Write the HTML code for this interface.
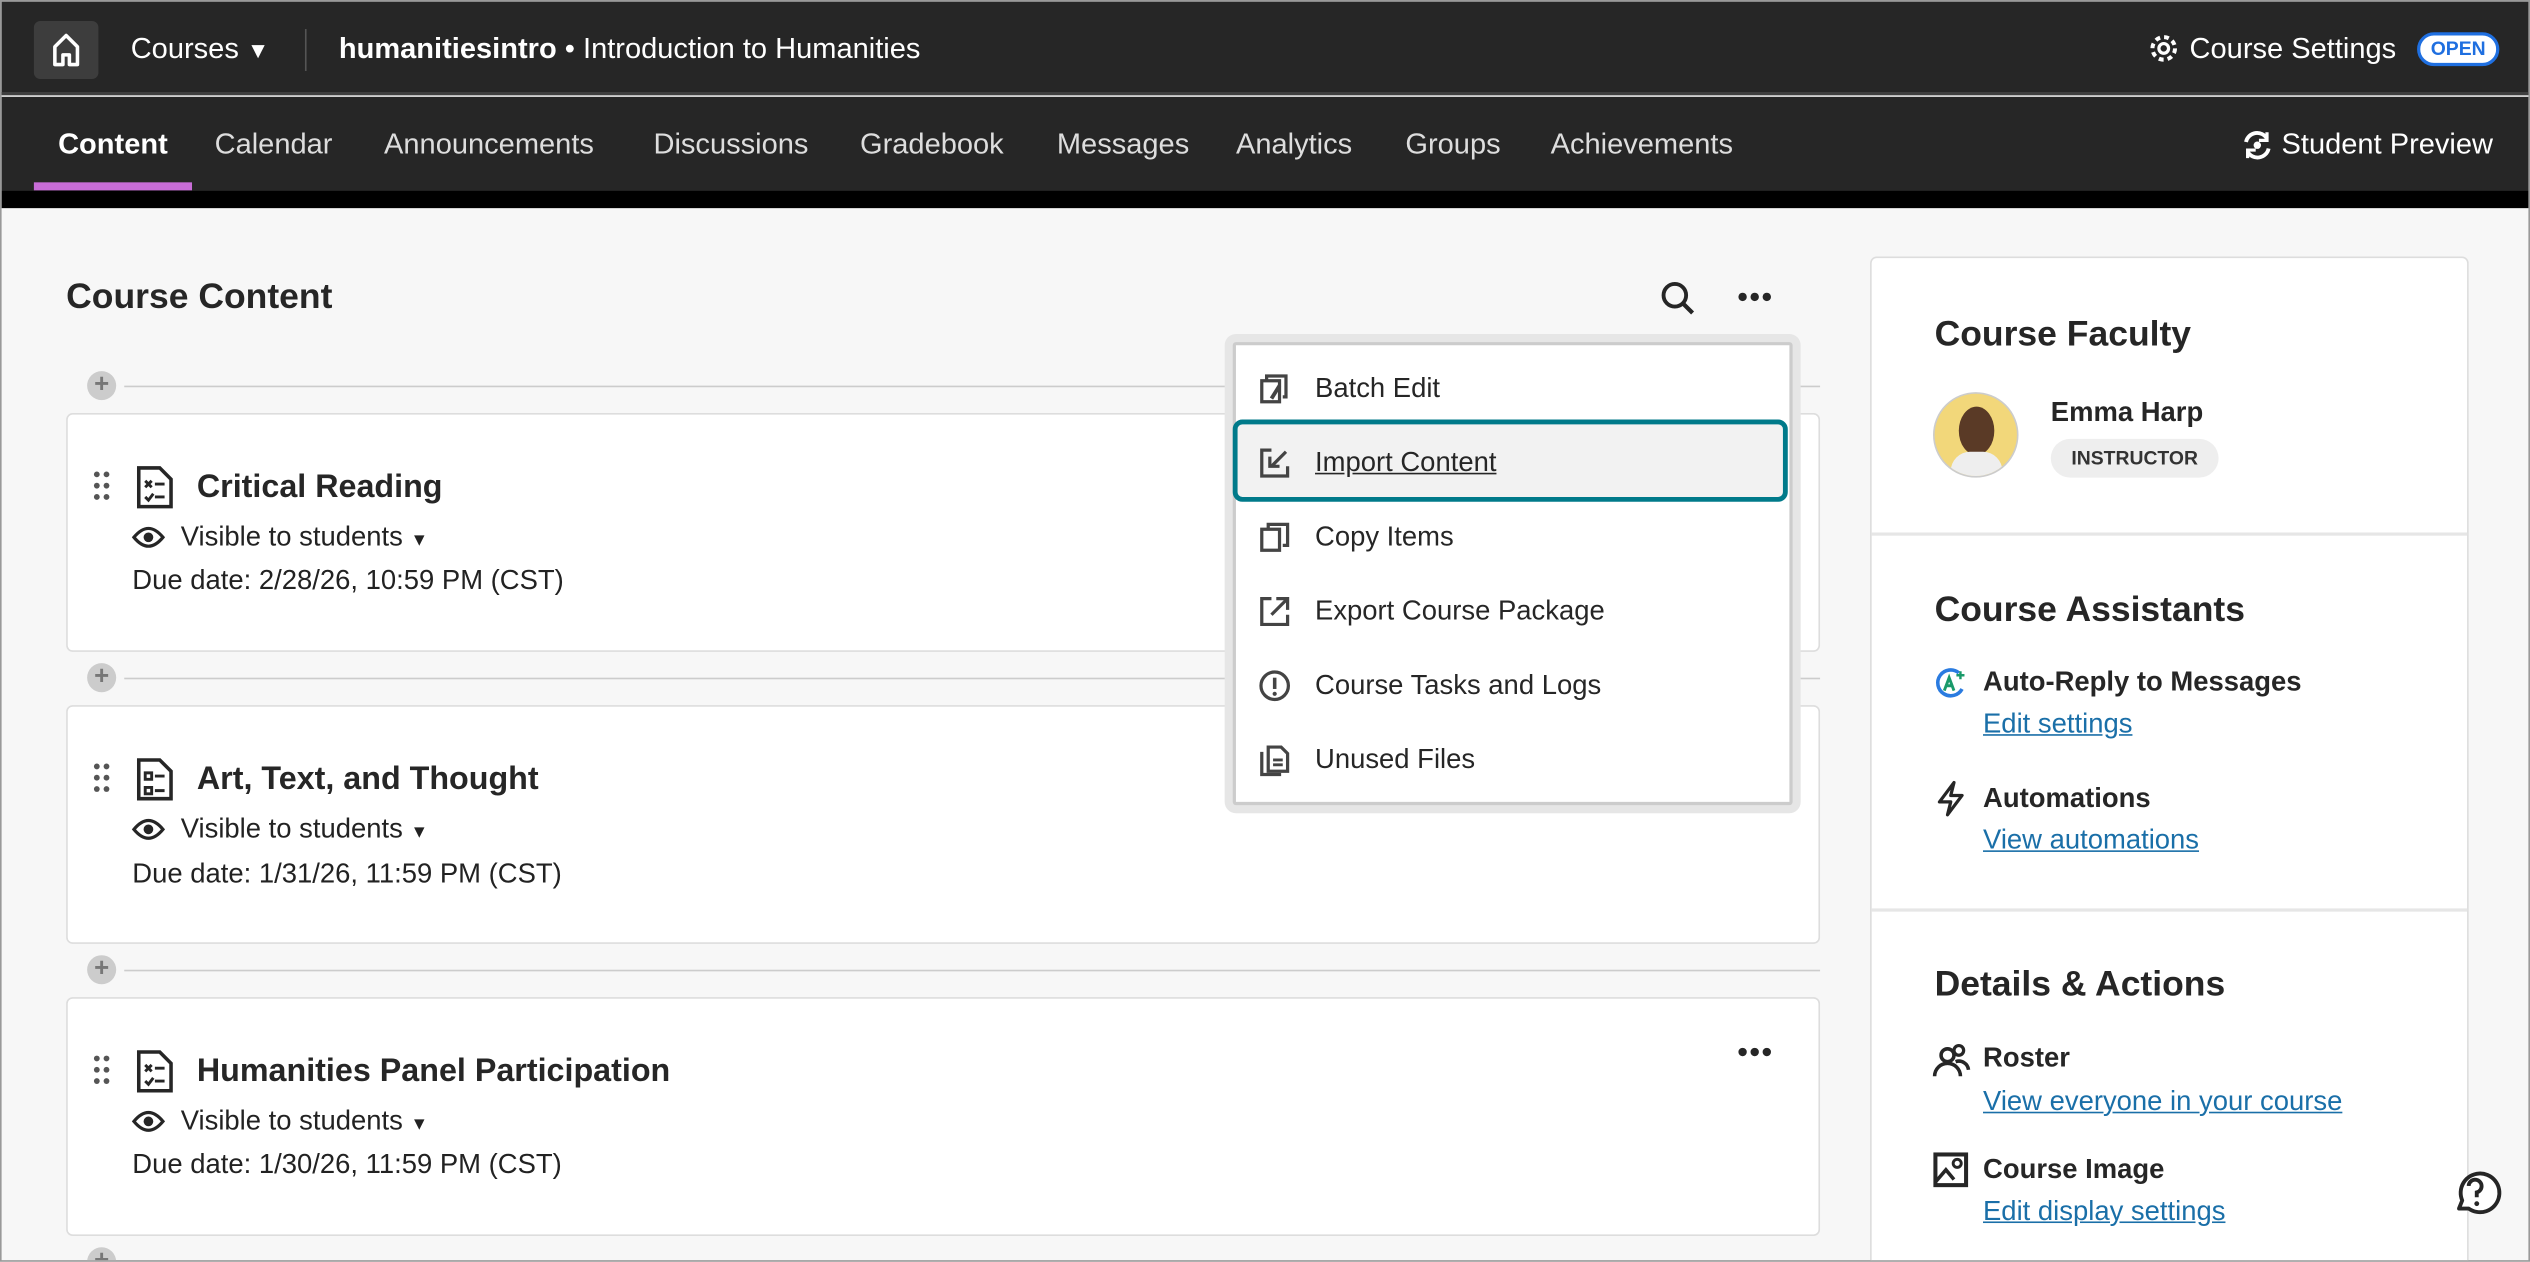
<!DOCTYPE html>
<html><head><meta charset="utf-8"><style>
*{margin:0;padding:0;box-sizing:border-box}
html,body{width:2530px;height:1262px;overflow:hidden;background:#f7f7f7}
#w{position:absolute;left:0;top:0;width:1568px;height:782px;overflow:hidden;transform:scale(1.61352);transform-origin:0 0;font-family:"Liberation Sans",sans-serif;color:#222;background:#f7f7f7;border:1px solid #999}
.a{position:absolute;white-space:nowrap}
.t{line-height:24px;height:24px}
.w{color:#fff}
.lnk{color:#1a6fa8;text-decoration:underline;font-size:17px}
svg{position:absolute;overflow:visible}
.card{position:absolute;left:40px;width:1087px;height:148px;background:#fff;border:1px solid #ddd;border-radius:4px}
.sep{position:absolute;left:76px;width:1051px;height:1px;background:#ccc}
.plus{position:absolute;left:53px;width:18px;height:18px;border-radius:50%;background:#ccc;color:#777;font-size:16px;line-height:18px;text-align:center;font-weight:bold}
.mi{position:absolute;left:814px;font-size:17px;line-height:24px;color:#262626}
</style></head><body><div id="w">
<div class="a" style="left:0;top:0;width:1568px;height:58px;background:#262626;border-bottom:2px solid #3f3f3f"></div>
<div class="a" style="left:0;top:59px;width:1568px;height:58px;background:#262626"></div>
<div class="a" style="left:0;top:117px;width:1568px;height:11px;background:#000"></div>
<div class="a" style="left:20px;top:12px;width:40px;height:36px;background:#3d3d3d;border-radius:4px"></div>
<svg style="left:31px;top:19px" width="18" height="22" viewBox="0 0 18 22"><path d="M2 20V9L9 2l7 7v11h-5v-6H7v6z" fill="none" stroke="#fff" stroke-width="2.2" stroke-linejoin="round"/></svg>
<div class="a t w" style="left:80px;top:17px;font-size:18px">Courses <span style="font-size:14px">▼</span></div>
<div class="a" style="left:188px;top:17px;width:1px;height:26px;background:#555"></div>
<div class="a t w" style="left:209px;top:17px;font-size:18px"><b>humanitiesintro</b> • Introduction to Humanities</div>
<svg style="left:1330px;top:19px" width="20" height="20" viewBox="0 0 20 20"><circle cx="10" cy="10" r="3" fill="none" stroke="#fff" stroke-width="2"/><circle cx="10" cy="10" r="7" fill="none" stroke="#fff" stroke-width="2.5" stroke-dasharray="3 2.5"/></svg>
<div class="a t w" style="left:1356px;top:17px;font-size:18px">Course Settings</div>
<div class="a" style="left:1497px;top:19px;width:51px;height:21px;border-radius:11px;background:#fff;border:2px solid #1f6fe0;color:#1f6fe0;font-weight:bold;font-size:12px;line-height:17px;text-align:center">OPEN</div>
<div class="a t w" style="left:35px;top:76px;font-size:18px;font-weight:bold">Content</div>
<div class="a" style="left:20px;top:112px;width:98px;height:5px;background:#c86dd7"></div>
<div class="a t" style="left:132px;top:76px;font-size:18px;color:#ddd">Calendar</div>
<div class="a t" style="left:237px;top:76px;font-size:18px;color:#ddd">Announcements</div>
<div class="a t" style="left:404px;top:76px;font-size:18px;color:#ddd">Discussions</div>
<div class="a t" style="left:532px;top:76px;font-size:18px;color:#ddd">Gradebook</div>
<div class="a t" style="left:654px;top:76px;font-size:18px;color:#ddd">Messages</div>
<div class="a t" style="left:765px;top:76px;font-size:18px;color:#ddd">Analytics</div>
<div class="a t" style="left:870px;top:76px;font-size:18px;color:#ddd">Groups</div>
<div class="a t" style="left:960px;top:76px;font-size:18px;color:#ddd">Achievements</div>
<svg style="left:1388px;top:79px" width="20" height="20" viewBox="0 0 20 20"><path d="M3 8a7 7 0 0 1 13-2M17 12a7 7 0 0 1-13 2" fill="none" stroke="#fff" stroke-width="2.4"/><path d="M16 2v5h-5M4 18v-5h5" fill="none" stroke="#fff" stroke-width="2"/><circle cx="10" cy="10" r="2.3" fill="#fff"/></svg>
<div class="a t w" style="left:1413px;top:76px;font-size:18px">Student Preview</div>
<div class="a" style="left:40px;top:168px;font-size:22px;font-weight:bold;color:#262626;line-height:30px">Course Content</div>
<svg style="left:1028px;top:173px" width="22" height="22" viewBox="0 0 22 22"><circle cx="9" cy="9" r="7" fill="none" stroke="#262626" stroke-width="2.4"/><path d="M14 14l6 6" stroke="#262626" stroke-width="2.6"/></svg>
<svg style="left:1076px;top:180px" width="22" height="6"><circle cx="3" cy="3" r="2.6" fill="#262626"/><circle cx="10.5" cy="3" r="2.6" fill="#262626"/><circle cx="18" cy="3" r="2.6" fill="#262626"/></svg>
<div class="plus" style="top:229px">+</div><div class="sep" style="top:238px"></div>
<div class="plus" style="top:410px">+</div><div class="sep" style="top:419px"></div>
<div class="plus" style="top:591px">+</div><div class="sep" style="top:600px"></div>
<div class="plus" style="top:772px">+</div>
<div class="card" style="top:255px"></div>
<div class="card" style="top:436px"></div>
<div class="card" style="top:617px"></div>
<svg style="left:1076px;top:648px" width="22" height="6"><circle cx="3" cy="3" r="2.6" fill="#262626"/><circle cx="10.5" cy="3" r="2.6" fill="#262626"/><circle cx="18" cy="3" r="2.6" fill="#262626"/></svg>
<svg style="left:57px;top:291px" width="10" height="20"><g fill="#555"><circle cx="2" cy="2" r="1.8"/><circle cx="8" cy="2" r="1.8"/><circle cx="2" cy="9" r="1.8"/><circle cx="8" cy="9" r="1.8"/><circle cx="2" cy="16" r="1.8"/><circle cx="8" cy="16" r="1.8"/></g></svg>
<svg style="left:83px;top:287px" width="24" height="28" viewBox="0 0 24 28"><path d="M2 2h13l7 7v17H2z" fill="none" stroke="#262626" stroke-width="2.2"/><path d="M6 10l4 4M10 10l-4 4M12 12h6M6 20l2 2 3-4M12 20h6" stroke="#262626" stroke-width="1.8" fill="none"/></svg>
<div class="a t" style="left:121px;top:289px;font-size:20px;font-weight:bold;color:#262626">Critical Reading</div>
<svg style="left:81px;top:324px" width="20" height="16" viewBox="0 0 20 16"><path d="M1 8Q10-3 19 8Q10 19 1 8z" fill="none" stroke="#262626" stroke-width="2"/><circle cx="10" cy="8" r="3" fill="#262626"/></svg>
<div class="a t" style="left:111px;top:320px;font-size:17px">Visible to students <span style="font-size:11px">▼</span></div>
<div class="a t" style="left:81px;top:347px;font-size:17px">Due date: 2/28/26, 10:59 PM (CST)</div>
<svg style="left:57px;top:472px" width="10" height="20"><g fill="#555"><circle cx="2" cy="2" r="1.8"/><circle cx="8" cy="2" r="1.8"/><circle cx="2" cy="9" r="1.8"/><circle cx="8" cy="9" r="1.8"/><circle cx="2" cy="16" r="1.8"/><circle cx="8" cy="16" r="1.8"/></g></svg>
<svg style="left:83px;top:468px" width="24" height="28" viewBox="0 0 24 28"><path d="M2 2h13l7 7v17H2z" fill="none" stroke="#262626" stroke-width="2.2"/><path d="M6 10h4v4H6zM12 12h6M6 19h4v4H6zM12 21h6" stroke="#262626" stroke-width="1.8" fill="none"/></svg>
<div class="a t" style="left:121px;top:470px;font-size:20px;font-weight:bold;color:#262626">Art, Text, and Thought</div>
<svg style="left:81px;top:505px" width="20" height="16" viewBox="0 0 20 16"><path d="M1 8Q10-3 19 8Q10 19 1 8z" fill="none" stroke="#262626" stroke-width="2"/><circle cx="10" cy="8" r="3" fill="#262626"/></svg>
<div class="a t" style="left:111px;top:501px;font-size:17px">Visible to students <span style="font-size:11px">▼</span></div>
<div class="a t" style="left:81px;top:529px;font-size:17px">Due date: 1/31/26, 11:59 PM (CST)</div>
<svg style="left:57px;top:653px" width="10" height="20"><g fill="#555"><circle cx="2" cy="2" r="1.8"/><circle cx="8" cy="2" r="1.8"/><circle cx="2" cy="9" r="1.8"/><circle cx="8" cy="9" r="1.8"/><circle cx="2" cy="16" r="1.8"/><circle cx="8" cy="16" r="1.8"/></g></svg>
<svg style="left:83px;top:649px" width="24" height="28" viewBox="0 0 24 28"><path d="M2 2h13l7 7v17H2z" fill="none" stroke="#262626" stroke-width="2.2"/><path d="M6 10l4 4M10 10l-4 4M12 12h6M6 20l2 2 3-4M12 20h6" stroke="#262626" stroke-width="1.8" fill="none"/></svg>
<div class="a t" style="left:121px;top:651px;font-size:20px;font-weight:bold;color:#262626">Humanities Panel Participation</div>
<svg style="left:81px;top:686px" width="20" height="16" viewBox="0 0 20 16"><path d="M1 8Q10-3 19 8Q10 19 1 8z" fill="none" stroke="#262626" stroke-width="2"/><circle cx="10" cy="8" r="3" fill="#262626"/></svg>
<div class="a t" style="left:111px;top:682px;font-size:17px">Visible to students <span style="font-size:11px">▼</span></div>
<div class="a t" style="left:81px;top:709px;font-size:17px">Due date: 1/30/26, 11:59 PM (CST)</div>
<div class="a" style="left:758px;top:206px;width:357px;height:297px;background:#e6e6e6;border-radius:7px"></div>
<div class="a" style="left:763px;top:211px;width:347px;height:287px;background:#fff;border:2px solid #ccc;border-radius:2px"></div>
<div class="a" style="left:763px;top:259px;width:344px;height:51px;background:#f2f2f2;border:3px solid #007a8a;border-radius:6px"></div>
<svg style="left:779px;top:230px" width="20" height="20" viewBox="0 0 20 20"><path d="M5 4V2h12v13h-2M2 5h11v13H2z" fill="none" stroke="#444" stroke-width="2"/><path d="M13 8l-5 8" stroke="#444" stroke-width="2.4"/></svg>
<div class="mi" style="top:228px">Batch Edit</div>
<svg style="left:779px;top:276px" width="20" height="20" viewBox="0 0 20 20"><path d="M8 2H2v16h16v-6" fill="none" stroke="#444" stroke-width="2"/><path d="M17 3l-9 9M7 6v6h6" fill="none" stroke="#444" stroke-width="2"/></svg>
<div class="mi" style="top:274px;text-decoration:underline">Import Content</div>
<svg style="left:779px;top:322px" width="20" height="20" viewBox="0 0 20 20"><path d="M6 4V2h12v13h-3M2 5h11v13H2z" fill="none" stroke="#444" stroke-width="2"/></svg>
<div class="mi" style="top:320px">Copy Items</div>
<svg style="left:779px;top:368px" width="20" height="20" viewBox="0 0 20 20"><path d="M8 2H2v16h16v-6" fill="none" stroke="#444" stroke-width="2"/><path d="M8 12l9-9M11 2h7v7" fill="none" stroke="#444" stroke-width="2"/></svg>
<div class="mi" style="top:366px">Export Course Package</div>
<svg style="left:779px;top:414px" width="20" height="20" viewBox="0 0 20 20"><circle cx="10" cy="10" r="8.5" fill="none" stroke="#444" stroke-width="2"/><path d="M10 5v7" stroke="#444" stroke-width="2.2"/><circle cx="10" cy="15" r="1.3" fill="#444"/></svg>
<div class="mi" style="top:412px">Course Tasks and Logs</div>
<svg style="left:779px;top:460px" width="20" height="20" viewBox="0 0 20 20"><path d="M6 2h8l4 4v11H6z" fill="none" stroke="#444" stroke-width="2"/><path d="M2 5v14h12" fill="none" stroke="#444" stroke-width="2"/><path d="M9 10h6M9 13h6" stroke="#444" stroke-width="1.8"/></svg>
<div class="mi" style="top:458px">Unused Files</div>
<div class="a" style="left:1158px;top:158px;width:371px;height:630px;background:#fff;border:1px solid #ddd;border-radius:4px"></div>
<div class="a" style="left:1159px;top:329px;width:369px;height:2px;background:#e6e6e6"></div>
<div class="a" style="left:1159px;top:562px;width:369px;height:2px;background:#e6e6e6"></div>
<div class="a" style="left:1198px;top:191px;font-size:22px;font-weight:bold;color:#262626;line-height:30px">Course Faculty</div>
<div class="a" style="left:1197px;top:242px;width:53px;height:53px;border-radius:50%;background:#f2d77a;border:1px solid #ccc;overflow:hidden"><div style="position:absolute;left:15px;top:8px;width:22px;height:30px;border-radius:50%;background:#5a3a26"></div><div style="position:absolute;left:10px;top:36px;width:32px;height:20px;border-radius:12px 12px 0 0;background:#eee"></div></div>
<div class="a t" style="left:1270px;top:243px;font-size:17px;font-weight:bold;color:#262626">Emma Harp</div>
<div class="a" style="left:1270px;top:271px;width:104px;height:24px;border-radius:12px;background:#eee;font-size:12px;font-weight:bold;line-height:24px;text-align:center;color:#333">INSTRUCTOR</div>
<div class="a" style="left:1198px;top:362px;font-size:22px;font-weight:bold;color:#262626;line-height:30px">Course Assistants</div>
<svg style="left:1198px;top:412px" width="20" height="20" viewBox="0 0 20 20"><path d="M15 4A8 8 0 1 0 17 14" fill="none" stroke="#2a7be0" stroke-width="2.2"/><path d="M6 15l3-8 3 8M7 12h4" fill="none" stroke="#1a9a6a" stroke-width="1.8"/><path d="M16 3v5M13.5 5.5h5" stroke="#1a9a6a" stroke-width="1.5"/></svg>
<div class="a t" style="left:1228px;top:410px;font-size:17px;font-weight:bold;color:#262626">Auto-Reply to Messages</div>
<div class="a t lnk" style="left:1228px;top:436px">Edit settings</div>
<svg style="left:1199px;top:483px" width="18" height="22" viewBox="0 0 18 22"><path d="M11 1L2 13h7l-2 8 9-12H9z" fill="none" stroke="#262626" stroke-width="2" stroke-linejoin="round"/></svg>
<div class="a t" style="left:1228px;top:482px;font-size:17px;font-weight:bold;color:#262626">Automations</div>
<div class="a t lnk" style="left:1228px;top:508px">View automations</div>
<div class="a" style="left:1198px;top:594px;font-size:22px;font-weight:bold;color:#262626;line-height:30px">Details &amp; Actions</div>
<svg style="left:1197px;top:645px" width="24" height="22" viewBox="0 0 24 22"><circle cx="9" cy="8" r="4" fill="none" stroke="#262626" stroke-width="2.2"/><circle cx="16" cy="5" r="3" fill="none" stroke="#262626" stroke-width="2"/><path d="M1 21a8 8 0 0 1 16 0M14 12a6 6 0 0 1 8 5" fill="none" stroke="#262626" stroke-width="2.2"/></svg>
<div class="a t" style="left:1228px;top:643px;font-size:17px;font-weight:bold;color:#262626">Roster</div>
<div class="a t lnk" style="left:1228px;top:670px">View everyone in your course</div>
<svg style="left:1197px;top:713px" width="22" height="22" viewBox="0 0 22 22"><rect x="1.5" y="1.5" width="19" height="19" fill="none" stroke="#262626" stroke-width="2.5"/><path d="M2 18l6-7 5 6" fill="none" stroke="#262626" stroke-width="2.2"/><circle cx="15" cy="7" r="2.5" fill="none" stroke="#262626" stroke-width="1.8"/></svg>
<div class="a t" style="left:1228px;top:712px;font-size:17px;font-weight:bold;color:#262626">Course Image</div>
<div class="a t lnk" style="left:1228px;top:738px">Edit display settings</div>
<svg style="left:1518px;top:723px" width="30" height="30" viewBox="0 0 30 30"><path d="M5 25l2-5A12 12 0 1 1 11 25z" fill="#fff" stroke="#262626" stroke-width="2.4" stroke-linejoin="round"/><path d="M11 11a4 4 0 1 1 5 4v3" fill="none" stroke="#262626" stroke-width="2.4"/><circle cx="16" cy="22" r="1.5" fill="#262626"/></svg>
</div></body></html>
